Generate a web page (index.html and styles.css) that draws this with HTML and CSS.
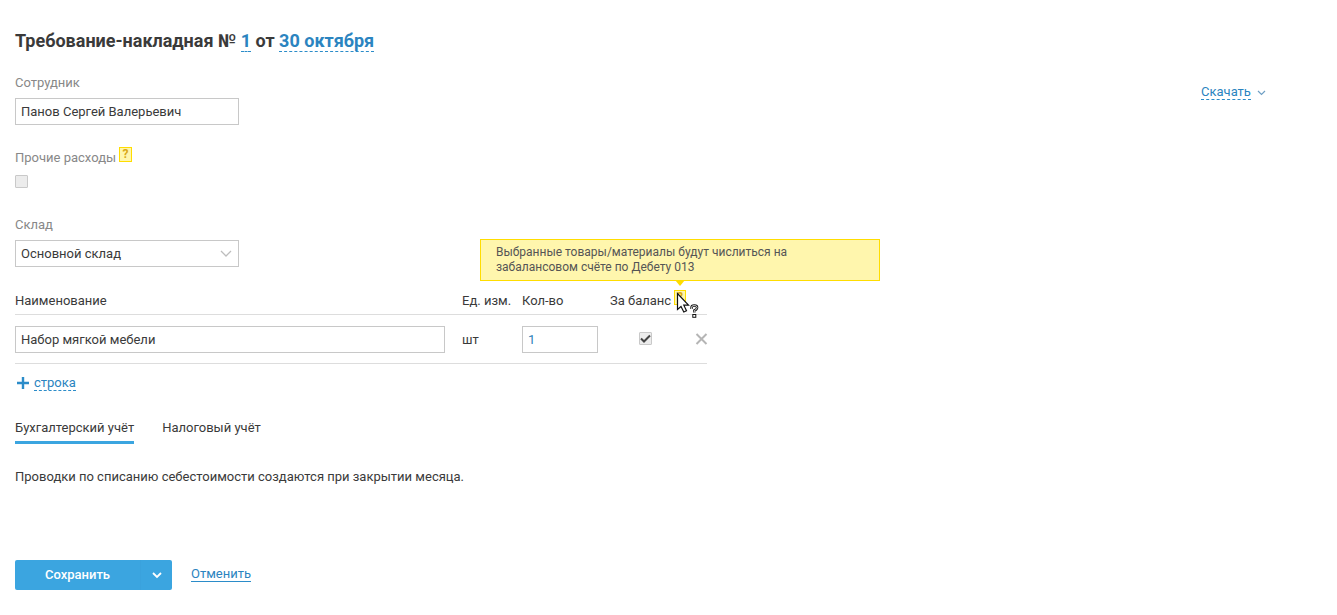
FILE: index.html
```html
<!DOCTYPE html>
<html lang="ru">
<head>
<meta charset="utf-8">
<title>Требование-накладная</title>
<link rel="stylesheet" href="styles.css">
</head>
<body>
<main class="page">
  <div class="download"><span class="dashed link">Скачать</span>
    <svg class="chev-s" width="9" height="6" viewBox="0 0 9 6"><path d="M1 1l3.500 3.500L8 1" fill="none" stroke="#6f9fc4" stroke-width="1.200"/></svg>
  </div>
  <h1 class="title">Требование-накладная № <span class="dashed link">1</span> от <span class="dashed link">30 октября</span></h1>

  <div class="label first">Сотрудник</div>
  <div class="field wide">Панов Сергей Валерьевич</div>

  <div class="label other">Прочие расходы <span class="hint">?</span></div>
  <span class="check off"></span>

  <div class="label stock">Склад</div>
  <div class="field wide select">Основной склад
    <svg width="12" height="7" viewBox="0 0 12 7"><path d="M1 1l5 5 5-5" fill="none" stroke="#bdbdbd" stroke-width="1.300"/></svg>
  </div>

  <div class="table">
    <div class="row head">
      <div>Наименование</div>
      <div class="c-unit">Ед. изм.</div>
      <div class="c-qty">Кол-во</div>
      <div class="c-bal">За баланс</div>
      <div></div>
    </div>
    <div class="row body-row">
      <div class="field name">Набор мягкой мебели</div>
      <div class="c-unit">шт</div>
      <div class="field qty">1</div>
      <div class="c-check"><span class="check on"><svg width="11" height="9" viewBox="0 0 11 9"><path d="M1 4.500l3 3L10 1.500" fill="none" stroke="#444" stroke-width="2"/></svg></span></div>
      <div class="c-del"><svg width="13" height="12" viewBox="0 0 13 12"><path d="M1.500 1l10 10M11.500 1l-10 10" stroke="#b5b5b5" stroke-width="2"/></svg></div>
    </div>
  </div>

  <div class="add">
    <svg width="12" height="12" viewBox="0 0 12 12"><path d="M6 0v12M0 6h12" stroke="#2b8cc9" stroke-width="2.400"/></svg>
    <span class="dashed link">строка</span>
  </div>

  <div class="tabs">
    <span class="tab active">Бухгалтерский учёт</span>
    <span class="tab">Налоговый учёт</span>
  </div>

  <p class="note">Проводки по списанию себестоимости создаются при закрытии месяца.</p>

  <div class="actions">
    <div class="save">
      <span class="save-main">Сохранить</span>
      <span class="save-more"><svg width="10" height="7" viewBox="0 0 10 7"><path d="M1 1l4 4 4-4" fill="none" stroke="#fff" stroke-width="1.800"/></svg></span>
    </div>
    <span class="cancel link">Отменить</span>
  </div>

  <div class="tooltip">Выбранные товары/материалы будут числиться на<br>забалансовом счёте по Дебету 013</div>
  <span class="hint-active">?</span>
  <svg class="cursor" width="24" height="28" viewBox="0 0 24 28">
    <path d="M1.500 1.500v16l3.500-3 2.800 5.500 2.700-1.300-2.700-5.500h4.700z" fill="#fff" stroke="#111" stroke-width="1.200"/>
    <path d="M15.500 17v-1.500q0-2 2.800-2t2.800 2q0 2-2.800 3v2" fill="none" stroke="#111" stroke-width="2.400"/>
    <path d="M15.500 17v-1.500q0-2 2.800-2t2.800 2q0 2-2.800 3v2" fill="none" stroke="#fff" stroke-width=".8"/>
    <rect x="16.800" y="22.500" width="3" height="2.800" fill="#fff" stroke="#111"/>
  </svg>
</main>
</body>
</html>
```
FILE: styles.css
```css
* { box-sizing: border-box; }
html, body { margin: 0; padding: 0; }
body {
  font-family: Roboto, "Noto Sans", sans-serif;
  font-size: 13px;
  line-height: 15px;
  color: #3a3a3a;
  background: #fff;
}
.page { position: relative; width: 1337px; height: 615px; padding: 30px 0 0 15px; overflow: hidden; }
.link { color: #2b84c0; }
.dashed { border-bottom: 1px dashed #2b8cc9; }
.download {
  position: absolute; left: 1201px; top: 84px;
  display: flex; align-items: center; gap: 6px;
}
.download .dashed { line-height: 15px; display: block; }
.chev-s { margin-top: 1px; }
.title { margin: 0; font-size: 18px; line-height: 22px; font-weight: 700; color: #3a3a3a; }
.title .dashed { display: inline-block; line-height: 21px; }
.label { color: #888; line-height: 15px; }
.label.first { margin-top: 23px; }
.label.other { margin-top: 25px; position: relative; }
.label.stock { margin-top: 29px; }
.hint {
  position: absolute; left: 104px; top: -3px;
  width: 13px; height: 15px;
  background: #fff6ad; border: 1px solid #ffdd00;
  color: #d9a916; font-size: 12px; font-weight: 700; line-height: 13px; text-align: center;
}
.field {
  height: 27px; border: 1px solid #c8c8c8; background: #fff;
  padding: 0 5px; line-height: 26px;
}
.wide { width: 224px; margin-top: 8px; }
.select { display: flex; justify-content: space-between; align-items: center; padding-right: 6px; }
.check {
  display: flex; align-items: center; justify-content: center;
  width: 13px; height: 13px; background: #ececec; border: 1px solid #c9c9c9; border-radius: 1px;
}
.check.off { margin-top: 10px; }
.table { width: 692px; margin-top: 26px; }
.row { display: grid; grid-template-columns: 430px 60px 88px 76px 38px; align-items: center; }
.row > .c-unit { padding-left: 17px; }
.head { height: 22px; padding-bottom: 6px; border-bottom: 1px solid #ddd; align-items: start; }
.head .c-unit { white-space: nowrap; }
.head .c-qty { padding-left: 17px; }
.head .c-bal { white-space: nowrap; padding-left: 17px; }
.body-row { height: 49px; border-bottom: 1px solid #ddd; padding-top: 1px; }
.name { width: 430px; }
.qty { width: 76px; margin-left: 17px; color: #2f7fb8; padding-left: 5px; }
.c-check { padding-left: 46px; margin-bottom: 2px; }
.c-del { display: flex; justify-content: flex-end; margin: 0 -1px 2px 0; }
.add { display: flex; align-items: center; gap: 5px; margin: 10px 0 0 2px; height: 17px; }
.tabs { display: flex; gap: 28px; margin-top: 29px; }
.tab { display: block; height: 24px; line-height: 15px; }
.tab.active { border-bottom: 3px solid #3ba5e0; }
.note { margin: 25px 0 0; }
.actions { display: flex; align-items: center; gap: 19px; margin-top: 76px; }
.save { display: flex; width: 157px; height: 30px; background: #3ba5e0; border-radius: 2px; color: #fff; }
.save-main { flex: 1; text-align: center; line-height: 30px; font-weight: 500; }
.save-more { width: 32px; display: flex; align-items: center; justify-content: center; border-left: 1px solid #3aa2dd; }
.cancel { border-bottom: 1px solid #2b8cc9; display: block; line-height: 15px; margin-bottom: 2px; }
.tooltip {
  position: absolute; left: 480px; top: 239px; width: 400px; height: 42px;
  background: #fff6ad; border: 1px solid #ffdd00;
  padding: 5px 15px; font-size: 12px; line-height: 15px; color: #555;
}
.tooltip::after {
  content: ""; position: absolute; left: 194px; top: 40px;
  border: 5px solid transparent; border-top: 6px solid #ffdd00; border-bottom: 0;
}
.hint-active {
  position: absolute; left: 674px; top: 290px; width: 12px; height: 15px;
  background: #fff6ad; border: 1px solid #ffdd00;
  color: #d9a916; font-size: 12px; font-weight: 700; line-height: 13px; text-align: center;
}
.cursor { position: absolute; left: 676px; top: 292px; }
```
